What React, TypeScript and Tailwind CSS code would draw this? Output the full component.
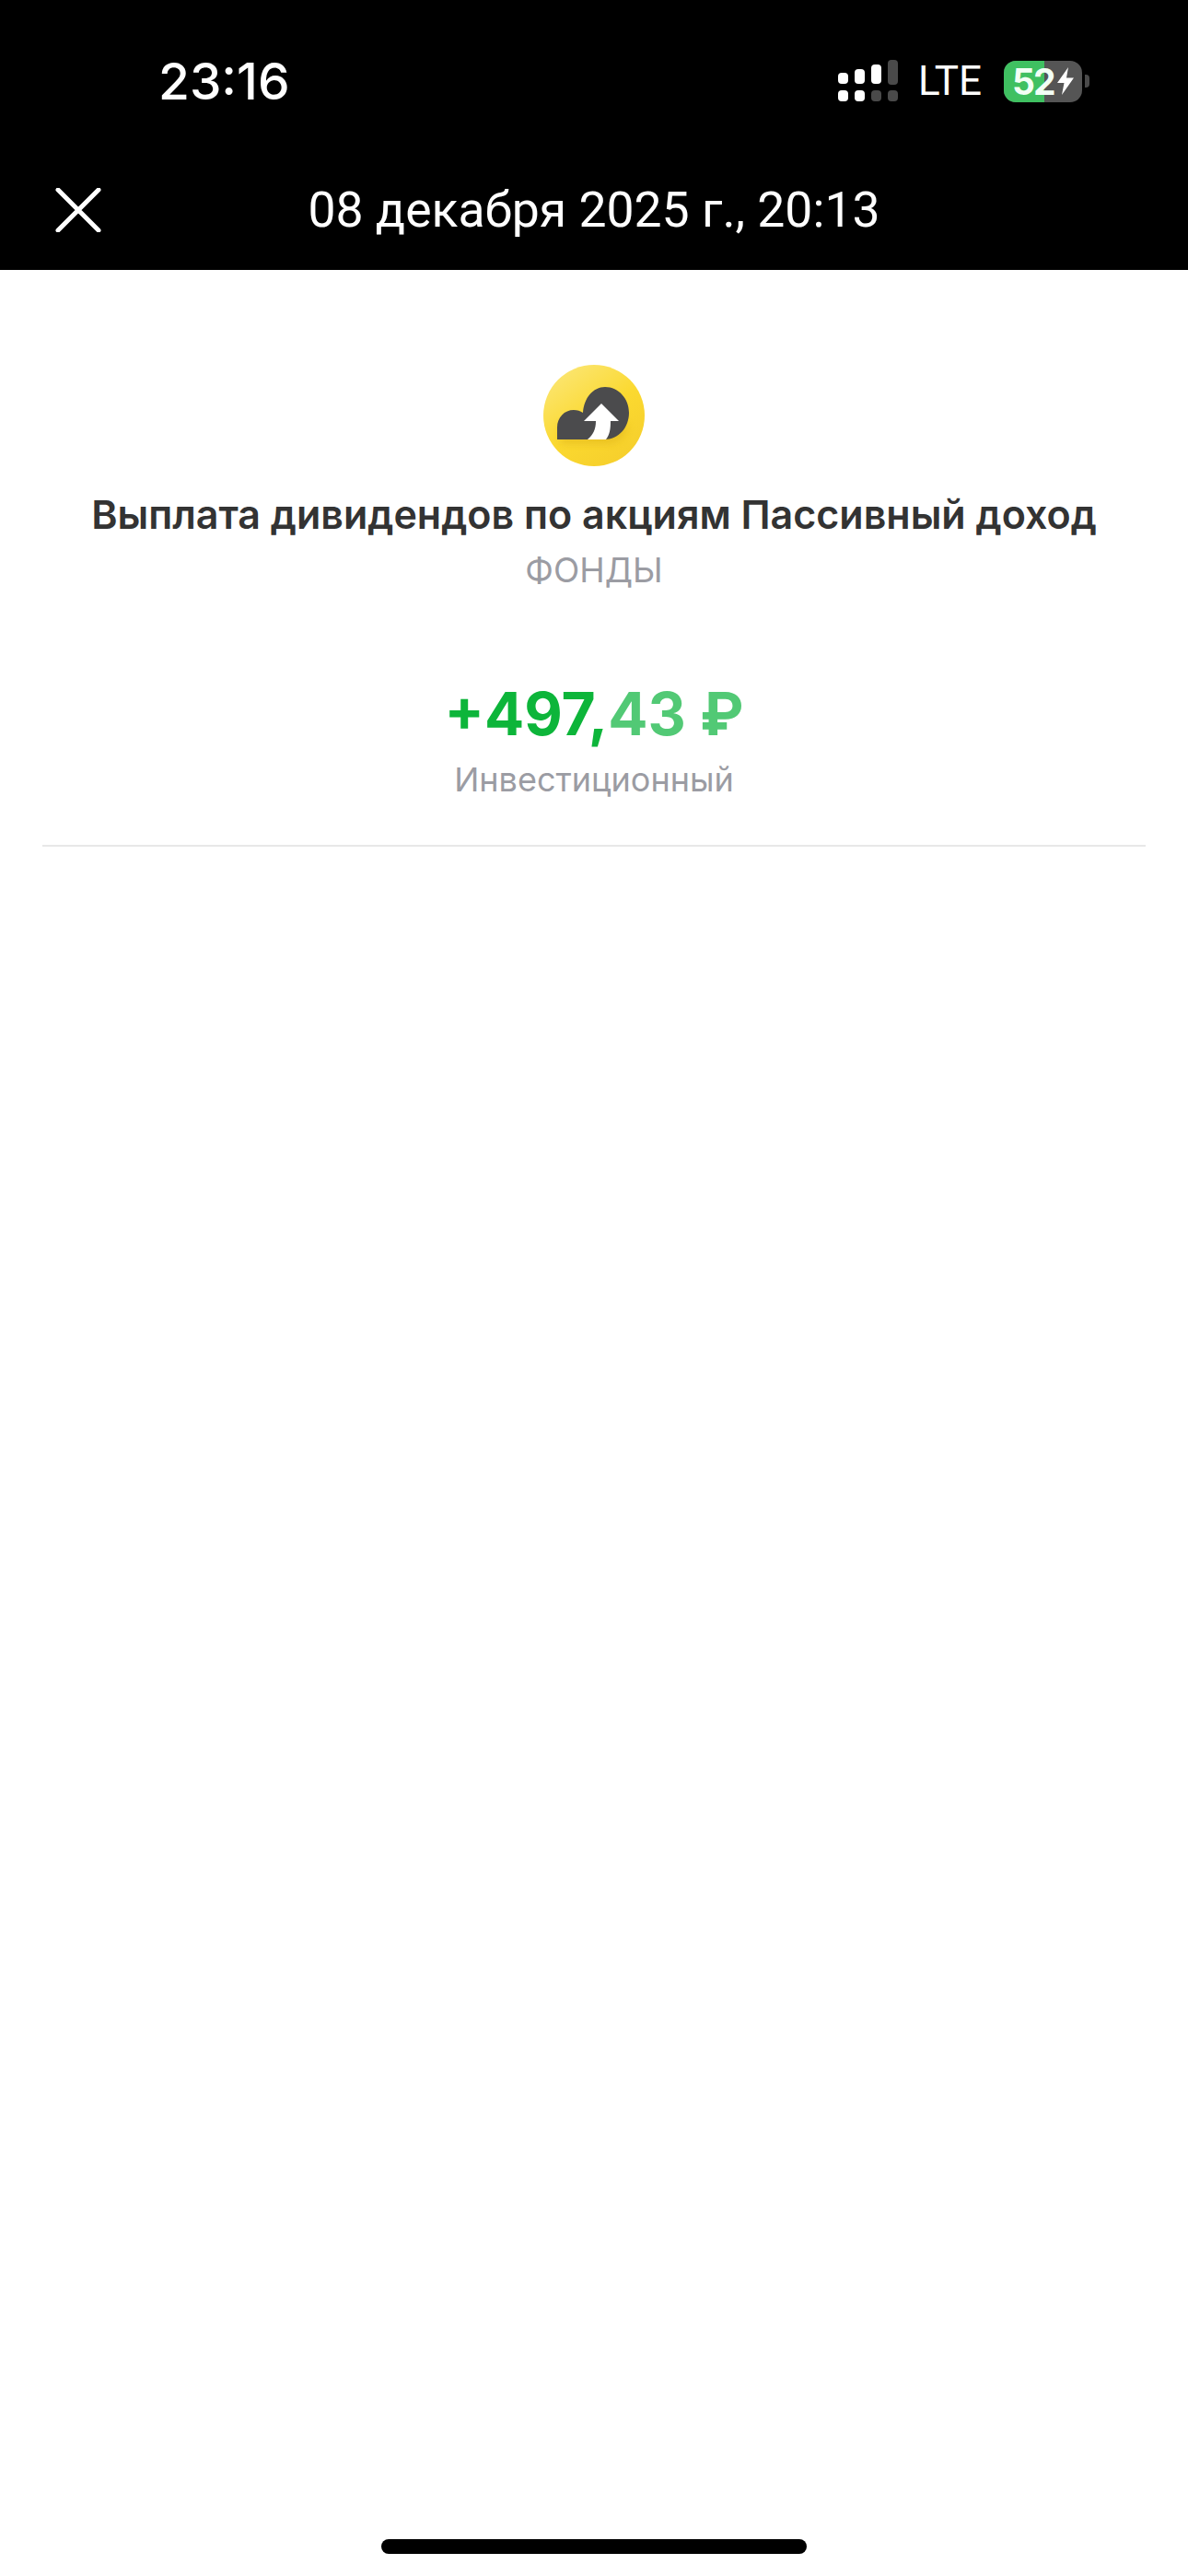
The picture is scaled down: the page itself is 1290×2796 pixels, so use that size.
import React from 'react';

function SignalIcon() {
    return (
        <svg width="66" height="46" viewBox="0 0 66 46">
            <rect x="0" y="14" width="11" height="12" rx="4" fill="#fff" />
            <rect x="18" y="10" width="11" height="16" rx="4" fill="#fff" />
            <rect x="36" y="5" width="11" height="21" rx="4" fill="#fff" />
            <rect x="54" y="0" width="11" height="27" rx="4" fill="#4a4a4a" />
            <rect x="0" y="33" width="11" height="12" rx="4" fill="#fff" />
            <rect x="18" y="33" width="11" height="12" rx="4" fill="#fff" />
            <rect x="36" y="33" width="11" height="12" rx="4" fill="#4a4a4a" />
            <rect x="54" y="33" width="11" height="12" rx="4" fill="#4a4a4a" />
        </svg>
    );
}

function Battery() {
    return (
        <div className="flex items-center gap-[3px]">
            <div className="relative w-[85px] h-[45px] rounded-[13px] overflow-hidden bg-[#555555] flex items-center">
                <div className="absolute left-0 top-0 bottom-0 w-[44px] bg-[#3fc061]" />
                <span className="relative ml-[9px] text-[39px] leading-none font-bold text-[#f2fff5] font-['Inter',sans-serif] tracking-[-2px]">52</span>
                <svg className="relative ml-[2px] shrink-0" width="20" height="30" viewBox="0 0 20 30">
                    <path d="M13 0 L1 17 H8.5 L6 30 L19 11.5 H11 Z" fill="#fff" />
                </svg>
            </div>
            <div className="w-[5px] h-[14px] rounded-r-[4px] bg-[#4a4a4a]" />
        </div>
    );
}

function CloseIcon() {
    return (
        <svg width="50" height="48" viewBox="0 0 50 48" fill="none">
            <path d="M3 2 L47 46 M47 2 L3 46" stroke="#fff" strokeWidth="5" strokeLinecap="round" />
        </svg>
    );
}

function DividendIcon() {
    return (
        <svg width="110" height="110" viewBox="0 0 110 110">
            <defs>
                <linearGradient id="coin" x1="0.2" y1="0.1" x2="0.8" y2="0.95">
                    <stop offset="0" stopColor="#fbe46a" />
                    <stop offset="0.5" stopColor="#fbd930" />
                    <stop offset="1" stopColor="#f6cf2c" />
                </linearGradient>
                <filter id="blur" x="-30%" y="-30%" width="160%" height="160%">
                    <feGaussianBlur stdDeviation="4" />
                </filter>
            </defs>
            <circle cx="55" cy="55" r="55" fill="url(#coin)" />
            <path d="M18 86 H70 C82 86 90 76 92 64 H18 Z" fill="#d9ad17" opacity="0.45" filter="url(#blur)" />
            <path d="M15 81 V68 C15 57 23 49 33 49 C37 49 40 50 43 52 C44 36 54 24 67 24 C82 24 93 37 93 52 C93 68 82 81 66 81 Z" fill="#4b4b4d" />
            <path d="M44 61 L63 42 L82 61 L73 61 C73 70 72 76 68 81 L48 81 C54 76 57 70 57 61 Z" fill="#fff" />
        </svg>
    );
}

export default function App() {
    return (
        <div className="w-[1290px] h-[2796px] bg-white flex flex-col font-['Inter',sans-serif]">
            <div className="bg-black h-[293px] px-[60px] flex flex-col shrink-0">
                <div className="flex items-center h-[88px] mt-[44px]">
                    <span className="ml-[112px] text-[55px] leading-none font-medium text-white font-['Inter',sans-serif]">23:16</span>
                    <div className="ml-auto mr-[47px] flex items-center">
                        <SignalIcon />
                        <span className="ml-[21px] mr-[24px] text-[44px] leading-none font-normal text-white font-['Roboto',sans-serif]">LTE</span>
                        <Battery />
                    </div>
                </div>
                <div className="relative flex items-center justify-center h-[48px] mt-[72px]">
                    <div className="absolute left-0 top-0">
                        <CloseIcon />
                    </div>
                    <span className="text-[53.5px] leading-none font-normal text-white font-['Roboto',sans-serif]">08 декабря 2025 г., 20:13</span>
                </div>
            </div>

            <div className="flex flex-col items-center mx-[46px] border-b-2 border-[#e8e8e8] pt-[103px] h-[626px] shrink-0">
                <DividendIcon />
                <h1 className="mt-[24px] text-[43px] leading-[56px] font-semibold text-[#333333] whitespace-nowrap">Выплата дивидендов по акциям Пассивный доход</h1>
                <p className="mt-[10px] text-[37px] leading-[46px] text-[#9b9ca3]">ФОНДЫ</p>
                <p className="mt-[89px] text-[64px] leading-[88px] font-bold whitespace-nowrap">
                    <span className="text-[#0db53a]">+497,</span>
                    <span className="text-[#52c975]">43 ₽</span>
                </p>
                <p className="mt-[4px] text-[36px] leading-[46px] text-[#9b9ca3]">Инвестиционный</p>
            </div>

            <div className="flex-1 flex flex-col justify-end items-center pb-[24px]">
                <div className="w-[462px] h-[16px] rounded-full bg-black" />
            </div>
        </div>
    );
}
